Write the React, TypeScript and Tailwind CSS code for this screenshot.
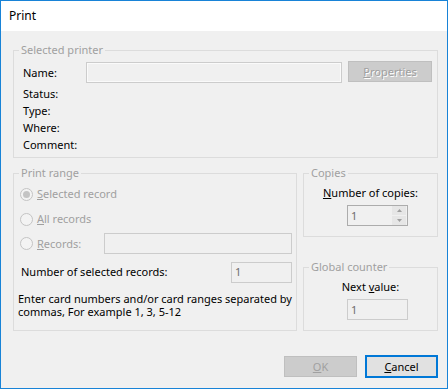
import React from "react"

function Legend({ children }: { children: React.ReactNode }) {
  return (
    <span className="absolute left-[5px] -top-[9px] px-[2px] bg-[#f0f0f0] text-[#a0a0a0] leading-[16px]">
      {children}
    </span>
  )
}

function Field({ value, className = "" }: { value?: string; className?: string }) {
  return (
    <div
      className={
        "h-[21px] border border-[#cccccc] bg-[#f0f0f0] flex items-center pl-[3px] text-[#6d6d6d] " +
        className
      }
    >
      {value}
    </div>
  )
}

function Radio({ checked, children }: { checked?: boolean; children: React.ReactNode }) {
  return (
    <div className="flex items-center">
      <span className="w-[13px] h-[13px] rounded-full border border-[#c4c4c4] bg-[#f3f3f3] flex items-center justify-center">
        {checked && <span className="w-[7px] h-[7px] rounded-full bg-[#c4c4c4]" />}
      </span>
      <span className="ml-[4px] text-[#a0a0a0]">{children}</span>
    </div>
  )
}

function Button({ children, focused }: { children: React.ReactNode; focused?: boolean }) {
  return focused ? (
    <button className="w-[73px] h-[23px] border-2 border-[#0078d7] bg-[#e1e1e1] text-black flex items-center justify-center">
      {children}
    </button>
  ) : (
    <button className="w-[73px] h-[21px] border border-[#bfbfbf] bg-[#cccccc] text-[#a0a0a0] flex items-center justify-center">
      {children}
    </button>
  )
}

export default function App() {
  return (
    <div className="w-[448px] h-[389px] border border-[#1883d7] bg-[#f0f0f0] flex flex-col font-['Noto_Sans',sans-serif] text-[11px] leading-[16px] text-black">
      <div className="h-[30px] bg-white flex items-center pl-[8px] shrink-0 text-[12px]">Print</div>

      <div className="flex-1 pl-[12px] pt-[19px]">
        {/* Selected printer */}
        <div className="relative w-[425px] h-[108px] border border-[#dcdcdc] pl-[9px] pt-[11px]">
          <Legend>Selected printer</Legend>
          <div className="flex items-center h-[21px]">
            <span className="w-[63px]">Name:</span>
            <Field className="w-[256px] bg-[#f0f0f0] shadow-[inset_0_0_0_1px_#fafafa]" />
            <div className="ml-[6px] w-[84px] h-[21px] -mt-[2px] border border-[#bfbfbf] bg-[#cccccc] text-[#a0a0a0] [text-shadow:1px_1px_0_#ffffff] flex items-center justify-center">
              <span><u>P</u>roperties</span>
            </div>
          </div>
          <div className="mt-[2px] flex flex-col">
            <span className="h-[17px] flex items-center">Status:</span>
            <span className="h-[17px] flex items-center">Type:</span>
            <span className="h-[17px] flex items-center">Where:</span>
            <span className="h-[17px] flex items-center">Comment:</span>
          </div>
        </div>

        <div className="mt-[15px] flex gap-[6px]">
          {/* Print range */}
          <div className="relative w-[284px] h-[158px] border border-[#dcdcdc] pt-[10px] pl-[6px] pr-[4px]">
            <Legend>Print range</Legend>
            <div className="h-[20px] flex items-center">
              <Radio checked>
                <u>S</u>elected record
              </Radio>
            </div>
            <div className="h-[20px] mt-[5px] flex items-center">
              <Radio>
                <u>A</u>ll records
              </Radio>
            </div>
            <div className="h-[21px] mt-[4px] flex items-center">
              <div className="flex items-center">
                <span className="w-[13px] h-[13px] rounded-full border border-[#c4c4c4] bg-[#f3f3f3]" />
                <span className="ml-[4px] w-[67px] text-[#a0a0a0]">
                  <u>R</u>ecords:
                </span>
              </div>
              <Field className="w-[188px]" />
            </div>
            <div className="mt-[8px] flex items-center justify-between h-[20px]">
              <span className="ml-[1px]">Number of selected records:</span>
              <Field value="1" className="w-[61px] h-[20px]" />
            </div>
            <p className="mt-[10px] -ml-[2px] leading-[13px]">
              Enter card numbers and/or card ranges separated by
              <br />
              commas, For example 1, 3, 5-12
            </p>
          </div>

          <div className="flex flex-col w-[135px]">
            {/* Copies */}
            <div className="relative h-[64px] border border-[#dcdcdc] pt-[11px]">
              <Legend>Copies</Legend>
              <div className="text-center h-[16px]">
                <u>N</u>umber of copies:
              </div>
              <div className="mt-[4px] ml-[43px] w-[61px] h-[21px] border border-[#acacac] bg-[#f0f0f0] flex items-center">
                <span className="flex-1 pl-[3px] text-[#6d6d6d]">1</span>
                <div className="w-[14px] h-[19px] mr-[1px] flex flex-col">
                  <div className="h-[10px] bg-[#e6e6e6] border-b border-[#f0f0f0] flex items-center justify-center">
                    <svg width="5" height="3" viewBox="0 0 5 3">
                      <path d="M2.5 0L5 3H0z" fill="#a0a0a0" />
                    </svg>
                  </div>
                  <div className="h-[9px] bg-[#e6e6e6] flex items-center justify-center">
                    <svg width="5" height="3" viewBox="0 0 5 3">
                      <path d="M0 0h5L2.5 3z" fill="#a0a0a0" />
                    </svg>
                  </div>
                </div>
              </div>
            </div>

            {/* Global counter */}
            <div className="relative mt-[30px] h-[64px] border border-[#dcdcdc] pt-[11px]">
              <Legend>Global counter</Legend>
              <div className="text-center h-[16px]">
                Next <u>v</u>alue:
              </div>
              <Field value="1" className="mt-[4px] ml-[43px] w-[61px] border-[#cccccc]" />
            </div>
          </div>
        </div>

        <div className="mt-[24px] flex justify-end items-center gap-[8px] pr-[9px]">
          <Button>
            <u>O</u>K
          </Button>
          <Button focused>
            <u>C</u>ancel
          </Button>
        </div>
      </div>
    </div>
  )
}
